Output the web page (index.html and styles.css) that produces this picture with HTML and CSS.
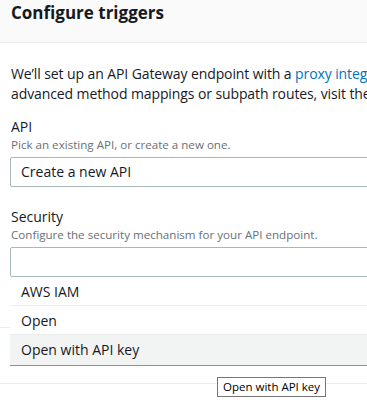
FILE: index.html
```html
<html>
    <head>
        <meta charset="utf-8">
        <title>Configure triggers</title>
        <meta name="viewport" content="width=device-width, initial-scale=1.0">
        <link rel="stylesheet" href="styles.css">
    </head>
    <body>
        <div class="header">
            <h2 class="title">Configure triggers</h2>
        </div>
        <div class="content">
            <p class="intro">
                <span class="intro-line">We&rsquo;ll set up an API Gateway endpoint with a <a class="link" href="#">proxy integration</a> type. To learn more about</span>
                <span class="intro-line">advanced method mappings or subpath routes, visit the Amazon API Gateway console.</span>
            </p>

            <div class="field">
                <label class="label">API</label>
                <div class="hint">Pick an existing API, or create a new one.</div>
                <div class="select">Create a new API</div>
            </div>

            <div class="field field-security">
                <label class="label">Security</label>
                <div class="hint">Configure the security mechanism for your API endpoint.</div>
                <div class="select-wrap">
                    <div class="select"></div>
                    <ul class="dropdown">
                        <li class="option">AWS IAM</li>
                        <li class="option">Open</li>
                        <li class="option option-hover">Open with API key</li>
                    </ul>
                </div>
            </div>
        </div>
        <div class="section-end"></div>
        <div class="section-next"></div>
        <div class="tooltip">Open with API key</div>
    </body>
</html>
```

FILE: styles.css
```css
body {
    margin: 0;
    width: 367px;
    height: 402px;
    overflow: hidden;
    position: relative;
    font-family: "Open Sans", "Noto Sans", sans-serif;
    font-size: 14px;
    line-height: 20px;
    color: #16191f;
    background-color: #ffffff;
}
.header {
    height: 42px;
    background-color: #fafafa;
    border-bottom: 1px solid #eaeded;
}
.title {
    margin: 0;
    padding: 1px 11px 0 11px;
    font-size: 17px;
    line-height: 24px;
    font-weight: bold;
    color: #16191f;
    white-space: nowrap;
}
.content {
    width: 420px;
    padding: 21px 0 0 11px;
}
.intro {
    margin: 0;
    letter-spacing: -0.1px;
}
.intro-line {
    display: block;
    white-space: nowrap;
}
.link {
    color: #0073bb;
    text-decoration: none;
}
.field {
    margin-top: 13px;
}
.field-security {
    margin-top: 20px;
}
.label {
    display: block;
}
.hint {
    font-size: 11.6px;
    line-height: 16px;
    color: #687078;
}
.select {
    box-sizing: border-box;
    height: 30px;
    margin-top: 4px;
    margin-left: -1px;
    padding: 4px 10px;
    border: 1px solid #aab7b8;
    border-radius: 2px;
    background-color: #ffffff;
}
.select-wrap {
    position: relative;
}
.dropdown {
    position: absolute;
    top: 30px;
    left: -1px;
    right: 0;
    margin: 0;
    padding: 0;
    list-style: none;
    background-color: #ffffff;
    border-bottom: 1px solid #879596;
    z-index: 2;
}
.option {
    height: 29px;
    padding: 5px 0 0 11px;
    box-sizing: border-box;
    border-bottom: 1px solid #eaeded;
}
.option:last-child {
    border-bottom: none;
    height: 30px;
}
.option-hover {
    background-color: #f2f3f3;
}
.section-end {
    margin-top: 50px;
    border-bottom: 1px solid #eaeded;
}
.section-next {
    height: 55px;
    border-bottom: 1px solid #eaeded;
}
.tooltip {
    position: absolute;
    left: 217px;
    top: 377px;
    padding: 1px 5px;
    font-size: 11.5px;
    line-height: 16px;
    color: #000000;
    background-color: #ffffff;
    border: 1px solid #767676;
    z-index: 3;
}
```
